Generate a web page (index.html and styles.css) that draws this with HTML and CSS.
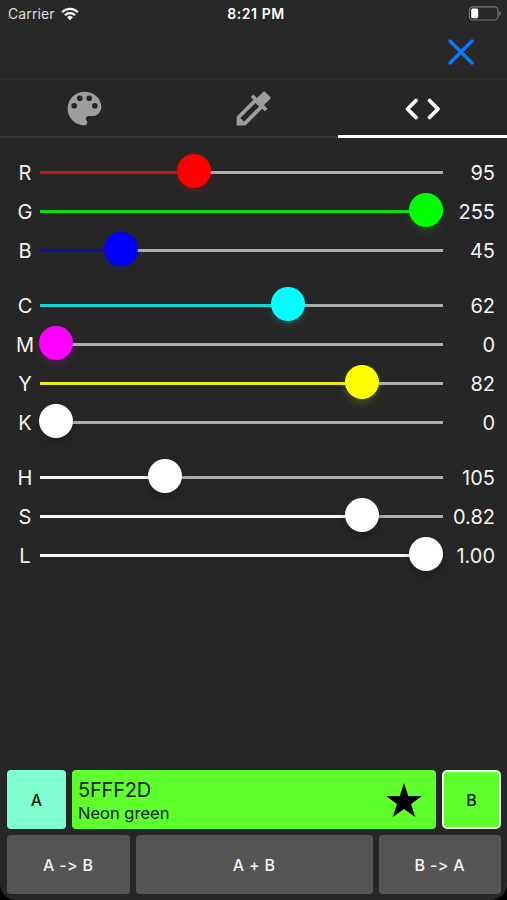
FILE: index.html
```
<!DOCTYPE html>
<html lang="en">
<head>
    <meta charset="UTF-8">
    <meta name="viewport" content="width=device-width, initial-scale=1.0">
    <title>Color Picker</title>
    <link rel="stylesheet" href="styles.css">
</head>
<body>
    <div class="screen">
        <div class="status-bar">
            <div class="carrier">
                <span>Carrier</span>
                <svg width="18" height="14" viewBox="0 0 18 14">
                    <g fill="none" stroke="#fff" stroke-width="2.3">
                        <path d="M1.2 5.2a11 11 0 0 1 15.6 0"/>
                        <path d="M4 8.2a7 7 0 0 1 10 0"/>
                    </g>
                    <path d="M9 13.2L6.1 10.2a4.2 4.2 0 0 1 5.8 0z" fill="#fff"/>
                </svg>
            </div>
            <div class="time">8:21 PM</div>
            <svg class="battery" width="33" height="15" viewBox="0 0 33 15">
                <rect x="1.4" y="0.8" width="28.6" height="13.2" rx="3.6" fill="none" stroke="#777" stroke-width="1.2"/>
                <rect x="3.2" y="2.6" width="7" height="9.6" rx="1.6" fill="#fff"/>
                <path d="M31.3 5.2q1.5.6 1.5 2.3t-1.5 2.3z" fill="#777"/>
            </svg>
        </div>

        <div class="header">
            <svg class="close" width="26" height="26" viewBox="0 0 26 26">
                <path d="M2 2L24 24M24 2L2 24" stroke="#0a7aff" stroke-width="3.4" stroke-linecap="round"/>
            </svg>
        </div>

        <div class="tabs">
            <div class="tab">
                <svg width="45" height="45" viewBox="0 0 24 24" fill="#9d9d9d">
                    <path d="M12 3a9 9 0 0 0 0 18c.83 0 1.5-.67 1.5-1.5 0-.39-.15-.74-.39-1.01-.23-.26-.38-.61-.38-.99 0-.83.67-1.5 1.5-1.5H16c2.76 0 5-2.24 5-5 0-4.42-4.03-8-9-8zm-5.5 9a1.5 1.5 0 1 1 0-3 1.5 1.5 0 0 1 0 3zm3-4a1.5 1.5 0 1 1 0-3 1.5 1.5 0 0 1 0 3zm5 0a1.5 1.5 0 1 1 0-3 1.5 1.5 0 0 1 0 3zm3 4a1.5 1.5 0 1 1 0-3 1.5 1.5 0 0 1 0 3z"/>
                </svg>
            </div>
            <div class="tab">
                <svg width="45" height="45" viewBox="0 0 24 24" fill="#9d9d9d">
                    <path d="M20.71 5.63l-2.34-2.34a1 1 0 0 0-1.41 0l-3.12 3.12-1.93-1.91-1.41 1.41 1.42 1.42L3 16.25V21h4.75l8.92-8.92 1.42 1.42 1.41-1.41-1.92-1.92 3.12-3.12c.4-.4.4-1.03.01-1.42zM6.92 19L5 17.08l8.06-8.06 1.92 1.92L6.92 19z"/>
                </svg>
            </div>
            <div class="tab active">
                <svg width="38" height="26" viewBox="0 0 38 26">
                    <path d="M12 4.500L3.500 13l8.500 8.500M25.500 4.500L34 13l-8.500 8.500" fill="none" stroke="#fff" stroke-width="3.8" stroke-linecap="round" stroke-linejoin="round"/>
                </svg>
            </div>
        </div>

        <div class="sliders">
            <div class="group" id="rgb"></div>
            <div class="group" id="cmyk"></div>
            <div class="group" id="hsl"></div>
        </div>

        <div class="footer">
            <div class="row colors">
                <div class="swatch swatch-a">A</div>
                <div class="current">
                    <div>
                        <div class="hex">5FFF2D</div>
                        <div class="name">Neon green</div>
                    </div>
                    <svg width="36" height="34" viewBox="0 0 36 34">
                        <path d="M18 0l4.3 12.9H36l-11 8.1 4.2 13L18 26 6.8 34 11 21 0 12.9h13.7z"/>
                    </svg>
                </div>
                <div class="swatch swatch-b">B</div>
            </div>
            <div class="row actions">
                <div class="button">A -&gt; B</div>
                <div class="button">A + B</div>
                <div class="button">B -&gt; A</div>
            </div>
        </div>
    </div>

    <script src="script.js"></script>
</body>
</html>
```
FILE: styles.css
```
body {
    font-family: 'Inter', sans-serif;
    margin: 0;
    background: #000;
    color: #f4f4f4;
}

.screen {
    box-sizing: border-box;
    height: 900px;
    display: flex;
    flex-direction: column;
    background: #262626;
    border-radius: 0 0 16px 16px;
    overflow: hidden;
}

/* Status bar */
.status-bar {
    display: grid;
    grid-template-columns: 1fr auto 1fr;
    align-items: center;
    height: 27px;
    padding: 0 6px 0 8px;
    background: #282828;
    font-size: 14px;
}

.carrier {
    display: flex;
    align-items: center;
    gap: 6px;
    color: #ddd;
    letter-spacing: 0.1px;
}

.time {
    font-size: 14px;
    font-weight: 600;
    letter-spacing: 0.6px;
    padding-left: 3px;
    color: #fff;
}

.battery {
    justify-self: end;
}

.header {
    box-sizing: border-box;
    display: flex;
    justify-content: flex-end;
    align-items: center;
    height: 53px;
    padding: 0 33px 1px 0;
    background: #282828;
    border-bottom: 2px solid #2d2d2d;
}

/* Tabs */
.tabs {
    display: flex;
    height: 58px;
}

.tab {
    box-sizing: border-box;
    flex: 1;
    display: flex;
    justify-content: center;
    align-items: center;
    padding-top: 1px;
    border-bottom: 2px solid #363636;
}

.tab.active {
    padding-top: 2px;
    border-bottom: 3px solid #fff;
}

/* Sliders */
.sliders {
    display: flex;
    flex-direction: column;
    gap: 16px;
    padding: 15px 12px 0 10px;
}

.slider {
    display: flex;
    align-items: center;
    height: 39px;
    font-size: 20px;
}

.slider .label {
    width: 30px;
    text-align: center;
    padding-top: 1px;
}

.slider .value {
    width: 52px;
    text-align: right;
    padding-top: 1px;
}

.track {
    position: relative;
    flex: 1;
    height: 3px;
    background: #adadad;
}

.fill {
    height: 3px;
    background: var(--line);
}

.thumb {
    position: absolute;
    top: -17px;
    width: 34px;
    height: 34px;
    margin-left: -17px;
    border-radius: 50%;
    background: var(--color);
    box-shadow: 0 4px 7px var(--glow);
}

.red { --color: #f00; --line: #c51212; --glow: rgba(255, 0, 0, 0.17); }
.green { --color: #0f0; --line: #10dc15; --glow: rgba(0, 255, 0, 0.17); }
.blue { --color: #00f; --line: #100fb4; --glow: rgba(0, 0, 255, 0.2); }
.cyan { --color: #0ff; --line: #12d5d9; --glow: rgba(0, 255, 255, 0.17); }
.magenta { --color: #f0f; --line: #d912d9; --glow: rgba(255, 0, 255, 0.17); }
.yellow { --color: #ff0; --line: #eeeb0c; --glow: rgba(255, 255, 0, 0.17); }
.white { --color: #fff; --line: #f5f5f5; --glow: rgba(0, 0, 0, 0.22); }

/* Footer */
.footer {
    display: flex;
    flex-direction: column;
    gap: 6px;
    margin-top: auto;
    padding: 0 6px 6px 7px;
}

.row {
    display: grid;
    gap: 6px;
    height: 59px;
}

.colors {
    grid-template-columns: 59px 1fr 59px;
    color: #10200d;
}

.actions {
    grid-template-columns: 122.5px 1fr 122.5px;
}

.swatch, .button {
    box-sizing: border-box;
    display: flex;
    justify-content: center;
    align-items: center;
    border-radius: 4px;
    font-size: 16px;
    font-weight: 500;
}

.swatch-a {
    background: #80ffd0;
}

.swatch-b {
    background: #5fff2d;
    border: 2.5px solid #f2f5ef;
    border-radius: 5px;
}

.current {
    display: flex;
    justify-content: space-between;
    align-items: center;
    padding: 0 14px 0 6px;
    background: #5fff2d;
    border-radius: 4px;
}

.current svg {
    fill: #000;
}

.hex {
    font-size: 20px;
    line-height: 24px;
    padding-top: 3px;
    letter-spacing: -0.2px;
}

.name {
    font-size: 16.5px;
    line-height: 22px;
}

.button {
    background: #555;
    color: #f4f4f4;
    letter-spacing: 0.3px;
    font-variant-ligatures: none;
    font-feature-settings: 'calt' 0;
}
```
FILE: script.js
```
// position is the thumb centre, in percent of the track
const groups = {
    rgb: [
        { label: 'R', value: '95', color: 'red', position: 38.2 },
        { label: 'G', value: '255', color: 'green', position: 95.8 },
        { label: 'B', value: '45', color: 'blue', position: 20 }
    ],
    cmyk: [
        { label: 'C', value: '62', color: 'cyan', position: 61.6 },
        { label: 'M', value: '0', color: 'magenta', position: 4 },
        { label: 'Y', value: '82', color: 'yellow', position: 79.8 },
        { label: 'K', value: '0', color: 'white', position: 4 }
    ],
    hsl: [
        { label: 'H', value: '105', color: 'white', position: 31 },
        { label: 'S', value: '0.82', color: 'white', position: 79.8 },
        { label: 'L', value: '1.00', color: 'white', position: 95.8 }
    ]
};

Object.keys(groups).forEach((id) => {
    document.getElementById(id).innerHTML = groups[id].map((s) => `
        <div class="slider ${s.color}">
            <span class="label">${s.label}</span>
            <div class="track">
                <div class="fill" style="width: ${s.position}%"></div>
                <div class="thumb" style="left: ${s.position}%"></div>
            </div>
            <span class="value">${s.value}</span>
        </div>`).join('');
});
```
